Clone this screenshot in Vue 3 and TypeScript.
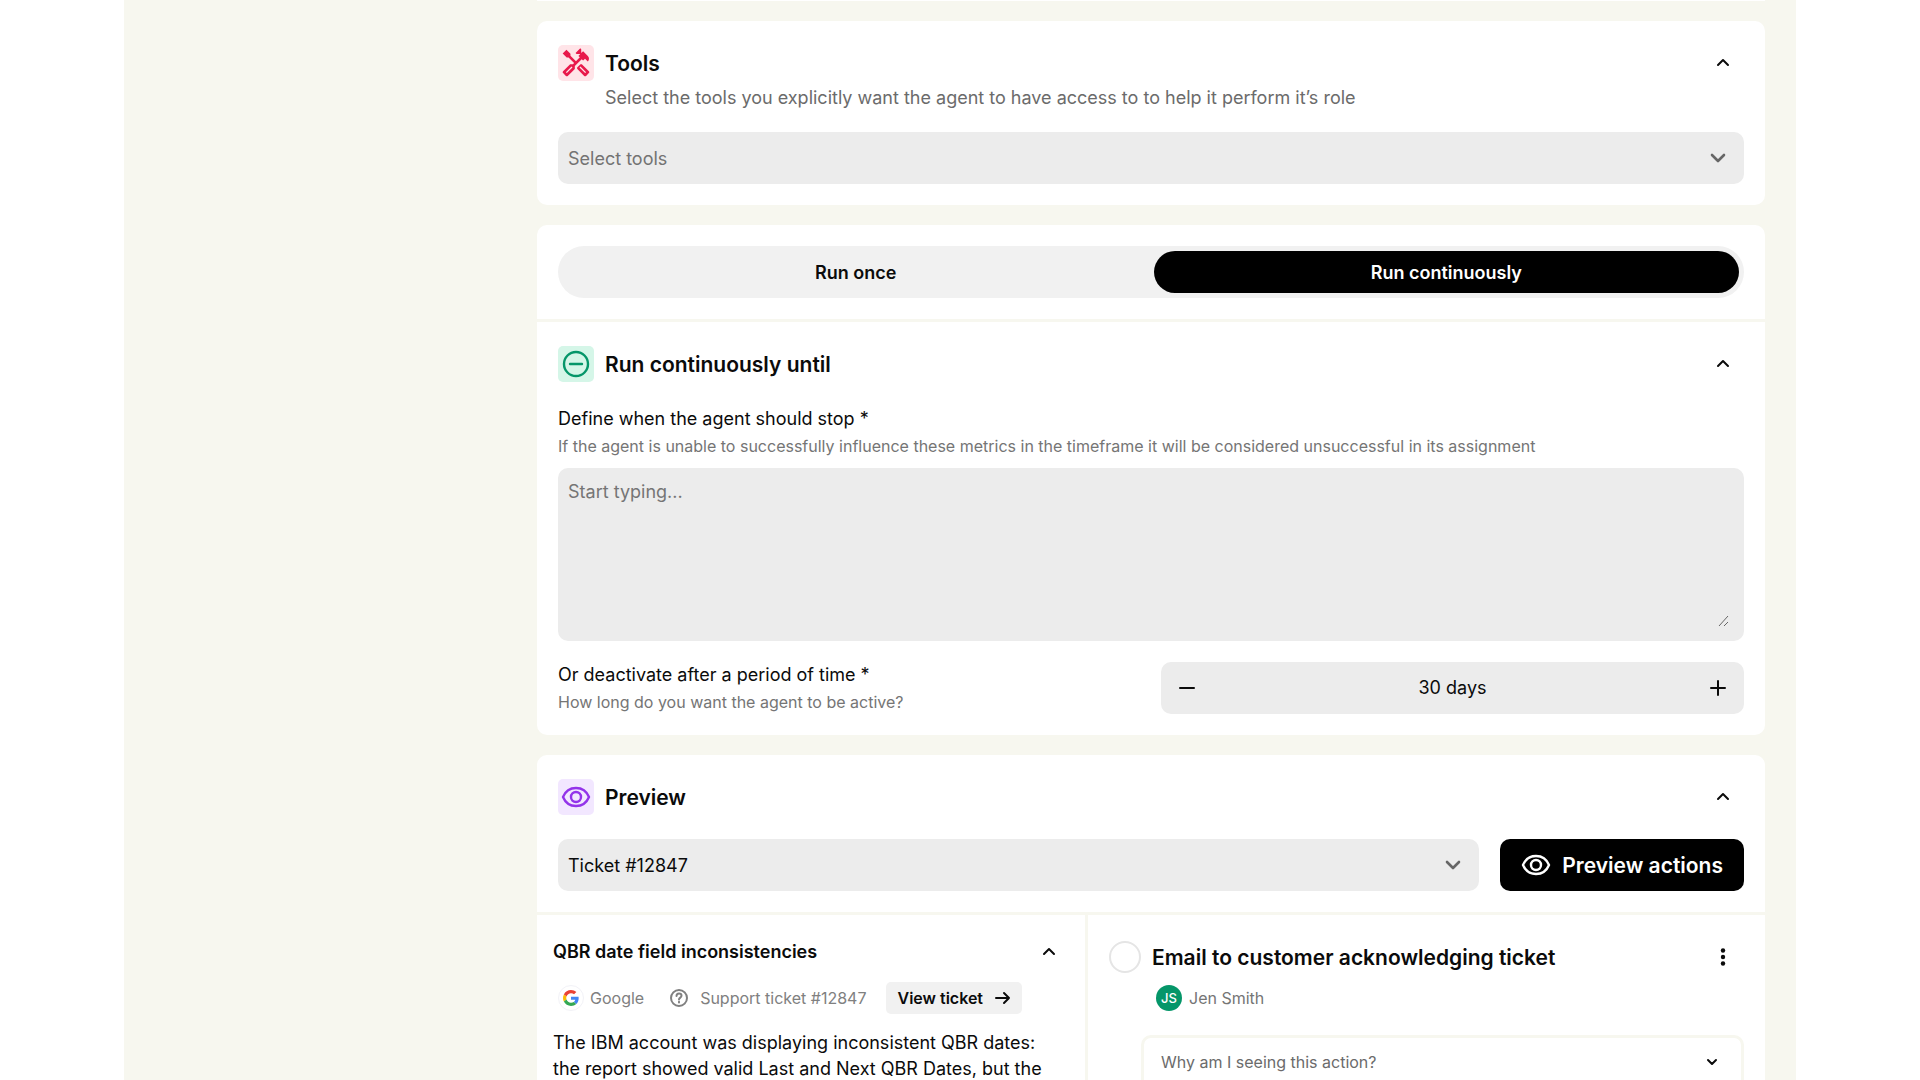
<script setup lang="ts">
import { ref } from 'vue'

const tool = ref('')
const ticket = ref('12847')
const mode = ref<'once' | 'continuous'>('continuous')
const stopRule = ref('')
const days = ref(30)
const done = ref(false)

function step(by: number) {
  days.value = Math.max(1, days.value + by)
}
</script>

<template>
  <div class="page">
    <main class="shell">
      <div class="column">
        <div class="card card-end"></div>

        <section class="card tools">
          <header class="head">
            <span class="badge rose">
              <svg width="32" height="32" viewBox="0 0 24 24" fill="currentColor" aria-hidden="true">
                <path d="M21.67 18.17l-5.3-5.3h-.99l-2.54 2.54v.99l5.3 5.3c.39.39 1.02.39 1.41 0l2.12-2.12c.39-.38.39-1.02 0-1.41zm-2.83 1.42l-4.24-4.24.71-.71 4.24 4.24-.71.71z" />
                <path d="M17.34 10.19l1.41-1.41 2.12 2.12c1.17-1.17 1.17-3.07 0-4.24l-3.54-3.54-1.41 1.41V1.71L15.22 1l-3.54 3.54.71.71h2.83l-1.41 1.41 1.06 1.06-2.89 2.89-4.13-4.13V5.06L4.83 2.04 2 4.87 5.03 7.9h1.41l4.13 4.13-.85.85H7.6l-5.3 5.3c-.39.39-.39 1.02 0 1.41l2.12 2.12c.39.39 1.02.39 1.41 0l5.3-5.3v-2.12l5.15-5.15 1.05 1.05zm-7.98 5.15l-4.24 4.24-.71-.71 4.24-4.24.71.71z" />
              </svg>
            </span>
            <h2>Tools</h2>
            <button class="fold" type="button" aria-label="Collapse tools">
              <svg width="14" height="10" viewBox="0 0 14 10" class="line"><path d="M2 7l5-5 5 5" /></svg>
            </button>
          </header>
          <p class="lead">Select the tools you explicitly want the agent to have access to to help it perform it’s role</p>
          <div class="field">
            <select v-model="tool" class="muted" aria-label="Select tools">
              <option value="">Select tools</option>
            </select>
            <svg class="caret line" width="18" height="12" viewBox="0 0 18 12"><path d="M3 3l6 6 6-6" /></svg>
          </div>
        </section>

        <section class="card">
          <div class="pad">
            <div class="segments">
              <button type="button" :class="{ on: mode === 'once' }" @click="mode = 'once'">Run once</button>
              <button type="button" :class="{ on: mode === 'continuous' }" @click="mode = 'continuous'">Run continuously</button>
            </div>
          </div>
          <div class="until">
            <header class="head">
              <span class="badge green">
                <svg width="28" height="28" viewBox="0 0 28 28" class="line bold"><circle cx="14" cy="14" r="12" /><path d="M8 14h12" /></svg>
              </span>
              <h2>Run continuously until</h2>
              <button class="fold" type="button" aria-label="Collapse run settings">
                <svg width="14" height="10" viewBox="0 0 14 10" class="line"><path d="M2 7l5-5 5 5" /></svg>
              </button>
            </header>
            <label class="label" for="stop">Define when the agent should stop *</label>
            <p class="hint">If the agent is unable to successfully influence these metrics in the timeframe it will be considered unsuccessful in its assignment</p>
            <div class="area">
              <textarea id="stop" v-model="stopRule" placeholder="Start typing..."></textarea>
              <svg class="grip" width="12" height="12" viewBox="0 0 12 12" aria-hidden="true"><path d="M1 11L10 1M6 11l4-4" /></svg>
            </div>
            <div class="halves">
              <div>
                <label class="label" for="period">Or deactivate after a period of time *</label>
                <p class="hint">How long do you want the agent to be active?</p>
              </div>
              <div class="stepper">
                <button type="button" aria-label="Fewer days" @click="step(-1)">
                  <svg width="18" height="18" viewBox="0 0 18 18" class="line"><path d="M2 9h14" /></svg>
                </button>
                <input id="period" type="text" :value="`${days} days`" readonly />
                <button type="button" aria-label="More days" @click="step(1)">
                  <svg width="18" height="18" viewBox="0 0 18 18" class="line"><path d="M2 9h14M9 2v14" /></svg>
                </button>
              </div>
            </div>
          </div>
        </section>

        <section class="card preview">
          <div class="top">
            <header class="head">
              <span class="badge violet">
                <svg width="30" height="24" viewBox="0 0 30 24" class="line bold"><path d="M2 12C4.500 6 9 3 15 3s10.500 3 13 9c-2.500 6-7 9-13 9S4.500 18 2 12z" /><circle cx="15" cy="12" r="5" /></svg>
              </span>
              <h2>Preview</h2>
              <button class="fold" type="button" aria-label="Collapse preview">
                <svg width="14" height="10" viewBox="0 0 14 10" class="line"><path d="M2 7l5-5 5 5" /></svg>
              </button>
            </header>
            <div class="pick">
              <div class="field">
                <select v-model="ticket" aria-label="Ticket">
                  <option value="12847">Ticket #12847</option>
                </select>
                <svg class="caret line" width="18" height="12" viewBox="0 0 18 12"><path d="M3 3l6 6 6-6" /></svg>
              </div>
              <button class="primary" type="button">
                <svg width="30" height="24" viewBox="0 0 30 24" class="line bold"><path d="M2 12C4.500 6 9 3 15 3s10.500 3 13 9c-2.500 6-7 9-13 9S4.500 18 2 12z" /><circle cx="15" cy="12" r="5" /></svg>
                <span>Preview actions</span>
              </button>
            </div>
          </div>
          <div class="split">
            <article class="ticket">
              <header class="head">
                <h3>QBR date field inconsistencies</h3>
                <button class="fold" type="button" aria-label="Collapse ticket">
                  <svg width="14" height="10" viewBox="0 0 14 10" class="line"><path d="M2 7l5-5 5 5" /></svg>
                </button>
              </header>
              <div class="meta">
                <span class="logo">
                  <svg width="16" height="16" viewBox="0 0 48 48" aria-hidden="true">
                    <path fill="#EA4335" d="M24 9.500c3.540 0 6.710 1.220 9.210 3.600l6.850-6.850C35.900 2.380 30.470 0 24 0 14.620 0 6.510 5.380 2.560 13.220l7.980 6.190C12.430 13.720 17.740 9.500 24 9.500z" />
                    <path fill="#4285F4" d="M46.980 24.550c0-1.570-.15-3.090-.38-4.550H24v9.020h12.940c-.58 2.960-2.260 5.480-4.780 7.180l7.730 6c4.510-4.180 7.090-10.360 7.090-17.650z" />
                    <path fill="#FBBC05" d="M10.530 28.590c-.48-1.450-.76-2.990-.76-4.590s.27-3.140.76-4.590l-7.980-6.190C.92 16.460 0 20.120 0 24c0 3.880.92 7.540 2.560 10.780l7.970-6.190z" />
                    <path fill="#34A853" d="M24 48c6.480 0 11.930-2.130 15.890-5.810l-7.730-6c-2.150 1.450-4.920 2.300-8.160 2.300-6.260 0-11.570-4.220-13.470-9.910l-7.980 6.190C6.510 42.620 14.620 48 24 48z" />
                  </svg>
                </span>
                <span>Google</span>
                <svg class="help line" width="20" height="20" viewBox="0 0 20 20"><circle cx="10" cy="10" r="8" /><path d="M7.500 8c0-1.500 1.100-2.500 2.500-2.500S12.500 6.500 12.500 7.800c0 1.700-2.500 1.900-2.500 3.700M10 13.800v.7" /></svg>
                <span>Support ticket #12847</span>
                <button class="view" type="button">
                  View ticket
                  <svg width="16" height="14" viewBox="0 0 16 14" class="line"><path d="M1 7h13M9 2l5 5-5 5" /></svg>
                </button>
              </div>
              <p class="body">The IBM account was displaying inconsistent QBR dates: the report showed valid Last and Next QBR Dates, but the</p>
            </article>
            <article class="action">
              <header class="head">
                <input v-model="done" class="tick" type="checkbox" aria-labelledby="email-action" />
                <h2 id="email-action">Email to customer acknowledging ticket</h2>
                <button class="fold" type="button" aria-label="More options">
                  <svg width="6" height="18" viewBox="0 0 6 18" fill="currentColor"><circle cx="3" cy="2.500" r="2.200" /><circle cx="3" cy="9" r="2.200" /><circle cx="3" cy="15.500" r="2.200" /></svg>
                </button>
              </header>
              <div class="owner"><span class="avatar">JS</span>Jen Smith</div>
              <button class="why" type="button">
                Why am I seeing this action?
                <svg width="12" height="8" viewBox="0 0 12 8" class="line"><path d="M2 2l4 4 4-4" /></svg>
              </button>
            </article>
          </div>
        </section>
      </div>
    </main>
  </div>
</template>

<style>
body {
  margin: 0;
  background: #fff;
}
</style>

<style scoped>
* {
  box-sizing: border-box;
}

.page {
  height: 100vh;
  overflow: hidden;
  padding: 0 124px;
  font-family: Inter, sans-serif;
  font-size: 18px;
  line-height: 26px;
  color: #0b0b0b;
}

.shell {
  min-height: 100%;
  padding: 0 31px 0 413px;
  background: #f7f7ef;
}

.column {
  display: flex;
  flex-direction: column;
  gap: 20px;
}

h2,
h3,
p {
  margin: 0;
}

button,
input,
select,
textarea {
  margin: 0;
  padding: 0;
  border: 0;
  background: none;
  color: inherit;
  font: inherit;
}

.line {
  fill: none;
  stroke: currentColor;
  stroke-width: 2;
  stroke-linecap: round;
  stroke-linejoin: round;
}

.bold {
  stroke-width: 2.4;
}

.card {
  border-radius: 10px;
  background: #fff;
}

.card-end {
  height: 1px;
  border-radius: 0;
}

.tools {
  padding: 24px 21px 21px;
}

.pad {
  padding: 21px;
}

.head {
  display: flex;
  align-items: center;
  gap: 11px;
}

.badge {
  display: grid;
  place-items: center;
  width: 36px;
  height: 36px;
  border-radius: 5px;
}

.rose {
  color: #e8194b;
  background: #ffe4e8;
}

.green {
  color: #059669;
  background: #d5f6e8;
}

.violet {
  color: #9333ea;
  background: #f2e7ff;
}

h2 {
  flex: 1;
  padding-top: 2px;
  font-size: 21px;
  font-weight: 600;
}

h3 {
  flex: 1;
  font-size: 18px;
  font-weight: 600;
}

.fold {
  display: grid;
  place-items: center;
  width: 42px;
  height: 32px;
}

.lead {
  padding: 4px 0 21px 47px;
  color: #6b6b6b;
}

.field {
  position: relative;
  flex: 1;
}

.field select {
  display: block;
  width: 100%;
  height: 52px;
  padding: 1px 10px 0;
  border-radius: 10px;
  background: #ececec;
  appearance: none;
}

.field .muted {
  color: #737373;
}

.caret {
  position: absolute;
  top: 20px;
  right: 17px;
  color: #666;
  stroke-width: 2.6;
  pointer-events: none;
}

.segments {
  display: grid;
  grid-template-columns: 1fr 1fr;
  gap: 5px;
  height: 52px;
  padding: 5px;
  border-radius: 26px;
  background: #f1f1f1;
}

.segments button {
  padding-top: 1px;
  border-radius: 21px;
  font-weight: 600;
}

.segments .on {
  color: #fff;
  background: #000;
}

.until {
  padding: 24px 21px 21px;
  border-top: 3px solid #f7f7ef;
}

.until .head {
  margin-bottom: 24px;
}

.label {
  display: block;
}

.hint {
  padding: 3px 0 1px;
  font-size: 16px;
  line-height: 22px;
  color: #757575;
}

.area {
  position: relative;
  margin: 10px 0 21px;
}

textarea {
  display: block;
  width: 100%;
  height: 173px;
  padding: 11px 10px;
  border-radius: 10px;
  background: #ececec;
  resize: none;
}

textarea::placeholder {
  color: #757575;
}

.grip {
  position: absolute;
  right: 14px;
  bottom: 14px;
  fill: none;
  stroke: #666;
}

.halves {
  display: grid;
  grid-template-columns: 1fr 1fr;
  gap: 20px;
}

.stepper {
  display: flex;
  height: 52px;
  border-radius: 10px;
  background: #ececec;
}

.stepper button {
  display: grid;
  place-items: center;
  width: 52px;
}

.stepper input {
  flex: 1;
  min-width: 0;
  text-align: center;
}

.top {
  padding: 24px 21px 21px;
}

.pick {
  display: flex;
  gap: 21px;
  margin-top: 24px;
}

.primary {
  display: flex;
  align-items: center;
  gap: 11px;
  padding: 0 21px;
  border-radius: 10px;
  font-size: 21px;
  font-weight: 600;
  color: #fff;
  background: #000;
}

.primary span {
  padding-top: 2px;
}

.split {
  display: grid;
  grid-template-columns: 551px 1fr;
  border-top: 3px solid #f7f7ef;
}

.ticket {
  padding: 21px 15px 21px 16px;
  border-right: 3px solid #f7f7ef;
}

.meta {
  display: flex;
  align-items: center;
  margin: 14px 0 16px 5px;
  font-size: 16px;
  line-height: 22px;
  color: #808080;
}

.logo {
  display: grid;
  place-items: center;
  width: 26px;
  height: 26px;
  margin-right: 6px;
  border: 1px solid #f2f2f7;
  border-radius: 50%;
}

.help {
  margin: 0 11px 0 25px;
}

.view {
  display: flex;
  align-items: center;
  gap: 12px;
  height: 32px;
  margin-left: 20px;
  padding: 0 11px;
  border-radius: 5px;
  font-weight: 600;
  color: #0b0b0b;
  background: #f1f1f1;
}

.body {
  padding-right: 10px;
}

.action {
  padding: 26px 21px;
}

.tick {
  width: 32px;
  height: 32px;
  border: 2px solid #e5e5e5;
  border-radius: 50%;
  appearance: none;
}

.owner {
  display: flex;
  align-items: center;
  gap: 7px;
  margin: 12px 0 24px 47px;
  font-size: 16px;
  line-height: 26px;
  color: #757575;
}

.avatar {
  width: 26px;
  height: 26px;
  border-radius: 50%;
  font-size: 13px;
  font-weight: 500;
  text-align: center;
  color: #fff;
  background: #059669;
}

.why {
  display: flex;
  align-items: center;
  justify-content: space-between;
  width: calc(100% - 32px);
  height: 54px;
  margin-left: 32px;
  padding: 0 23px 0 17px;
  border: 3px solid #f7f7ef;
  border-radius: 10px;
  font-size: 16px;
  color: #6b6b6b;
}

.why svg {
  color: #0b0b0b;
}
</style>
